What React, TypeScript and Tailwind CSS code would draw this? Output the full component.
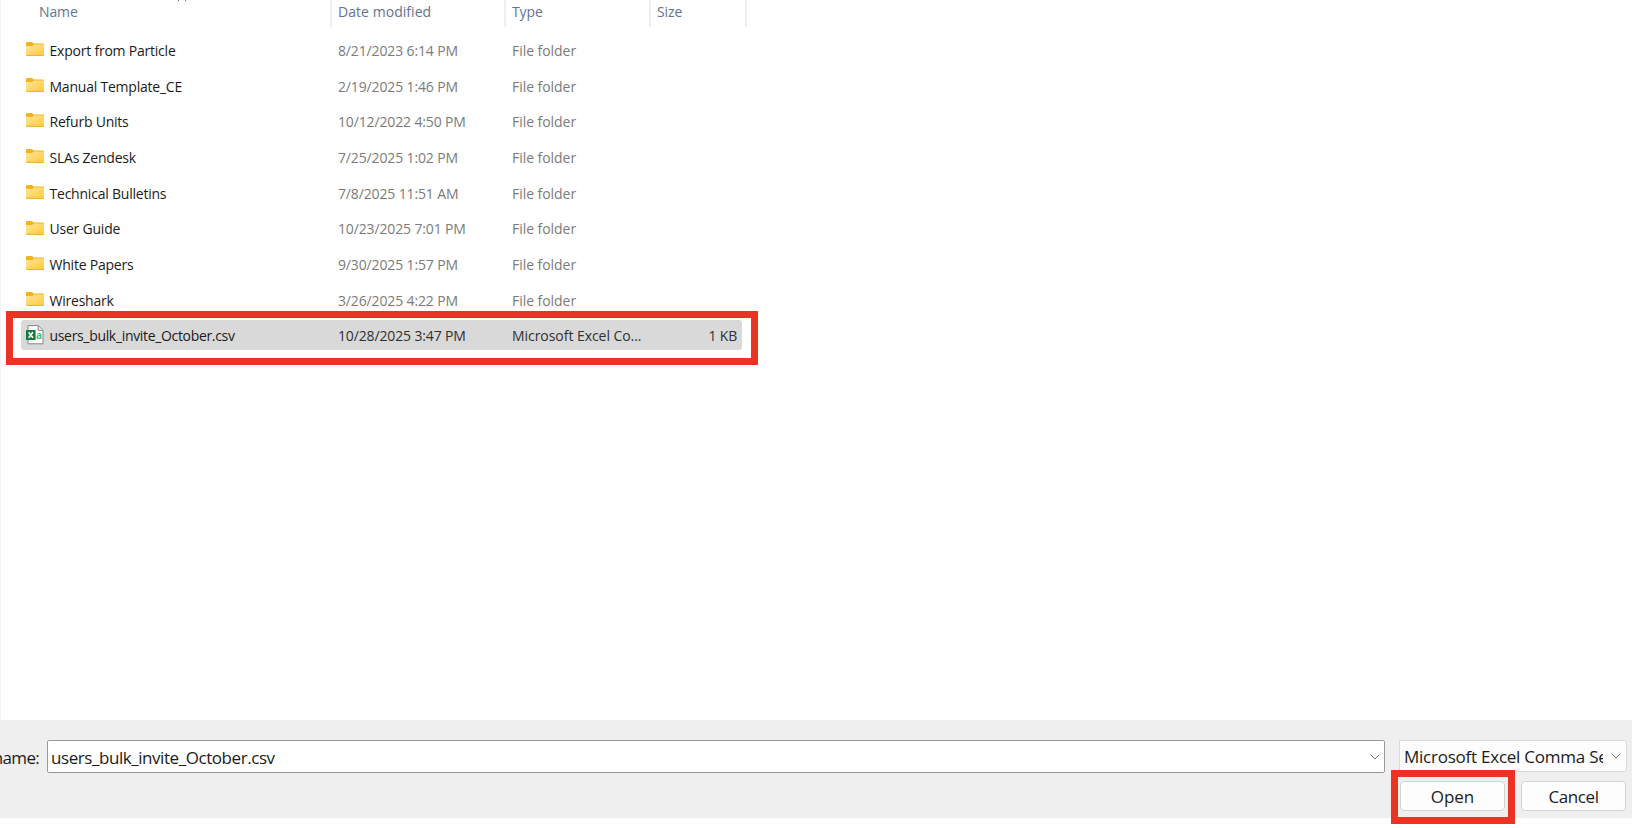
import { ReactNode, useState } from "react";

interface IFileEntry {
    /** File or folder name */
    name: string,
    /** Last modified date */
    modified: string,
    /** Text for the type column */
    type: string,
    /** Size, only set on files */
    size?: string
}

const files: IFileEntry[] = [
    { name: 'Export from Particle', modified: '8/21/2023 6:14 PM', type: 'File folder' },
    { name: 'Manual Template_CE', modified: '2/19/2025 1:46 PM', type: 'File folder' },
    { name: 'Refurb Units', modified: '10/12/2022 4:50 PM', type: 'File folder' },
    { name: 'SLAs Zendesk', modified: '7/25/2025 1:02 PM', type: 'File folder' },
    { name: 'Technical Bulletins', modified: '7/8/2025 11:51 AM', type: 'File folder' },
    { name: 'User Guide', modified: '10/23/2025 7:01 PM', type: 'File folder' },
    { name: 'White Papers', modified: '9/30/2025 1:57 PM', type: 'File folder' },
    { name: 'Wireshark', modified: '3/26/2025 4:22 PM', type: 'File folder' },
    { name: 'users_bulk_invite_October.csv', modified: '10/28/2025 3:47 PM', type: 'Microsoft Excel Co...', size: '1 KB' },
]

const FolderIcon = () => (
    <svg width="18" height="14" viewBox="0 0 18 14" className="mb-[1.5px] shrink-0">
        <defs>
            <linearGradient id="folder" x1="0" y1="0" x2="1" y2="1">
                <stop offset="0" stopColor="#ffe69c" />
                <stop offset="1" stopColor="#fdc93c" />
            </linearGradient>
        </defs>
        <path d="M0 1Q0 0 1 0H6L7.7 1.6H17Q18 1.6 18 2.6V8H0Z" fill="#f6b21b" />
        <path d="M0 4H6.2L8 2.5H18V13Q18 14 17 14H1Q0 14 0 13Z" fill="url(#folder)" />
        <path d="M0.3 13.4H17.7" stroke="#efb02c" strokeWidth="1" />
    </svg>
)

const CsvIcon = () => (
    <svg width="18" height="20" viewBox="0 0 18 20" className="shrink-0">
        <path d="M2 0.6H12.3L17 5.3V18.8H2Z" fill="#fff" stroke="#858585" />
        <path d="M12.2 0.8V5.4H16.8" fill="none" stroke="#858585" />
        <text x="10" y="13.5" fontSize="10" fontWeight="700" fill="#33c481" fontFamily="Open Sans, sans-serif">a</text>
        <rect x="0" y="5" width="9.6" height="10" rx="0.6" fill="#107c41" />
        <path d="M2.7 7.3L6.9 12.7M6.9 7.3L2.7 12.7" stroke="#fff" strokeWidth="1.7" />
    </svg>
)

const Chevron = () => (
    <svg width="10" height="6" viewBox="0 0 10 6" fill="none" stroke="#777" className="shrink-0">
        <path d="M0.7 0.7L5 5L9.3 0.7" />
    </svg>
)

/** Red frame drawn over the parts of the dialog that need attention */
const Highlight = ({ className }: { className: string }) => (
    <div className={`pointer-events-none absolute border-[7px] border-[#ec3323] ${className}`} />
)

const HeaderCell = ({ children, className }: { children: ReactNode, className: string }) => (
    <div className={`h-[27px] shrink-0 border-r-2 border-[#efefef] ${className}`}>{children}</div>
)

const FileRow = ({ file, selected, onSelect }: { file: IFileEntry, selected: boolean, onSelect: () => void }) => (
    <li className="relative flex h-[35.7px] items-center" onClick={onSelect}>
        <div className={`ml-[21px] flex h-[30px] w-[721px] items-center rounded-[3px] ${selected ? 'bg-[#d9d9d9] text-[#303030]' : 'text-[#7b7b7b]'}`}>
            <div className={`flex w-[317px] items-center gap-[5.5px] pl-[5px] text-[#1b1b1b] ${file.size ? 'tracking-[-0.33px]' : 'tracking-[-0.22px]'}`}>
                {file.size ? <CsvIcon /> : <FolderIcon />}
                <span className="relative top-px">{file.name}</span>
            </div>
            <span className="relative top-px w-[174px] tracking-[-0.14px]">{file.modified}</span>
            <span className="relative top-px w-[145px] tracking-[-0.05px]">{file.type}</span>
            <span className="relative top-px grow pr-[5px] text-right tracking-[-0.2px]">{file.size}</span>
        </div>
        {file.size && <Highlight className="left-[6px] top-[-6.6px] h-[54px] w-[752px]" />}
    </li>
)

/** File picker dialog */
const App = () => {
    const [selected, setSelected] = useState('users_bulk_invite_October.csv');

    return (
        <div className="flex h-[828px] w-[1634px] flex-col overflow-hidden bg-white font-['Open_Sans','Noto_Sans',sans-serif]">
            <main className="h-[720px] border-l border-[#f5f5f5] text-[14px] leading-5">
                <div className="-ml-px flex h-[32px] items-start tracking-[-0.1px] text-[#64748b]">
                    <HeaderCell className="flex w-[332px] pl-[39px] pt-[2px]">
                        <span className="w-[138px]">Name</span>
                        <svg width="10" height="6" viewBox="0 0 10 6" fill="none" stroke="#777" className="mt-[-6px]">
                            <path d="M0.7 5.3L5 1L9.3 5.3" />
                        </svg>
                    </HeaderCell>
                    <HeaderCell className="w-[174px] pl-[6px] pt-[2px] tracking-[0.05px]">Date modified</HeaderCell>
                    <HeaderCell className="w-[145px] pl-[6px] pt-[2px]">Type</HeaderCell>
                    <HeaderCell className="w-[96px] pl-[6px] pt-[2px]">Size</HeaderCell>
                </div>
                <ul className="-ml-px">
                    {files.map((file) => (
                        <FileRow key={file.name} file={file} selected={file.name === selected} onSelect={() => setSelected(file.name)} />
                    ))}
                </ul>
            </main>
            <footer className="flex h-[98px] w-[1632px] flex-col bg-[#efefef] pt-5 text-[17px] leading-6 text-[#1b1b1b]">
                <div className="flex h-[33px] items-start">
                    <div className="flex h-[33px] w-[47px] shrink-0 items-center justify-end pr-2 tracking-[-0.7px]">
                        <span className="relative top-px whitespace-nowrap">File name:</span>
                    </div>
                    <div className="flex h-[33px] w-[1338px] items-center justify-between rounded-[2px] border border-[#999] bg-white pl-[3px] pr-[4px]">
                        <span className="relative top-px tracking-[-0.44px]">{selected}</span>
                        <Chevron />
                    </div>
                    <div className="ml-[14px] flex h-[32px] w-[228px] items-center justify-between rounded-[2px] border border-[#d9d9d9] bg-[#fdfdfd] pl-[4px] pr-[5px]">
                        <span className="relative top-px w-[199px] overflow-hidden whitespace-nowrap tracking-[-0.24px]">Microsoft Excel Comma Separated</span>
                        <Chevron />
                    </div>
                </div>
                <div className="mt-2 flex justify-end gap-4 pr-[6px]">
                    <div className="relative">
                        <button className="h-[30px] w-[105px] rounded-[4px] border border-[#d3d3d3] bg-[#fdfdfd] pt-px">Open</button>
                        <Highlight className="left-[-9.5px] top-[-11px] h-[54px] w-[124px]" />
                    </div>
                    <button className="h-[30px] w-[105px] rounded-[4px] border border-[#d3d3d3] bg-[#fdfdfd] pt-px tracking-[-0.4px]">Cancel</button>
                </div>
            </footer>
        </div>
    )
}

export default App;
